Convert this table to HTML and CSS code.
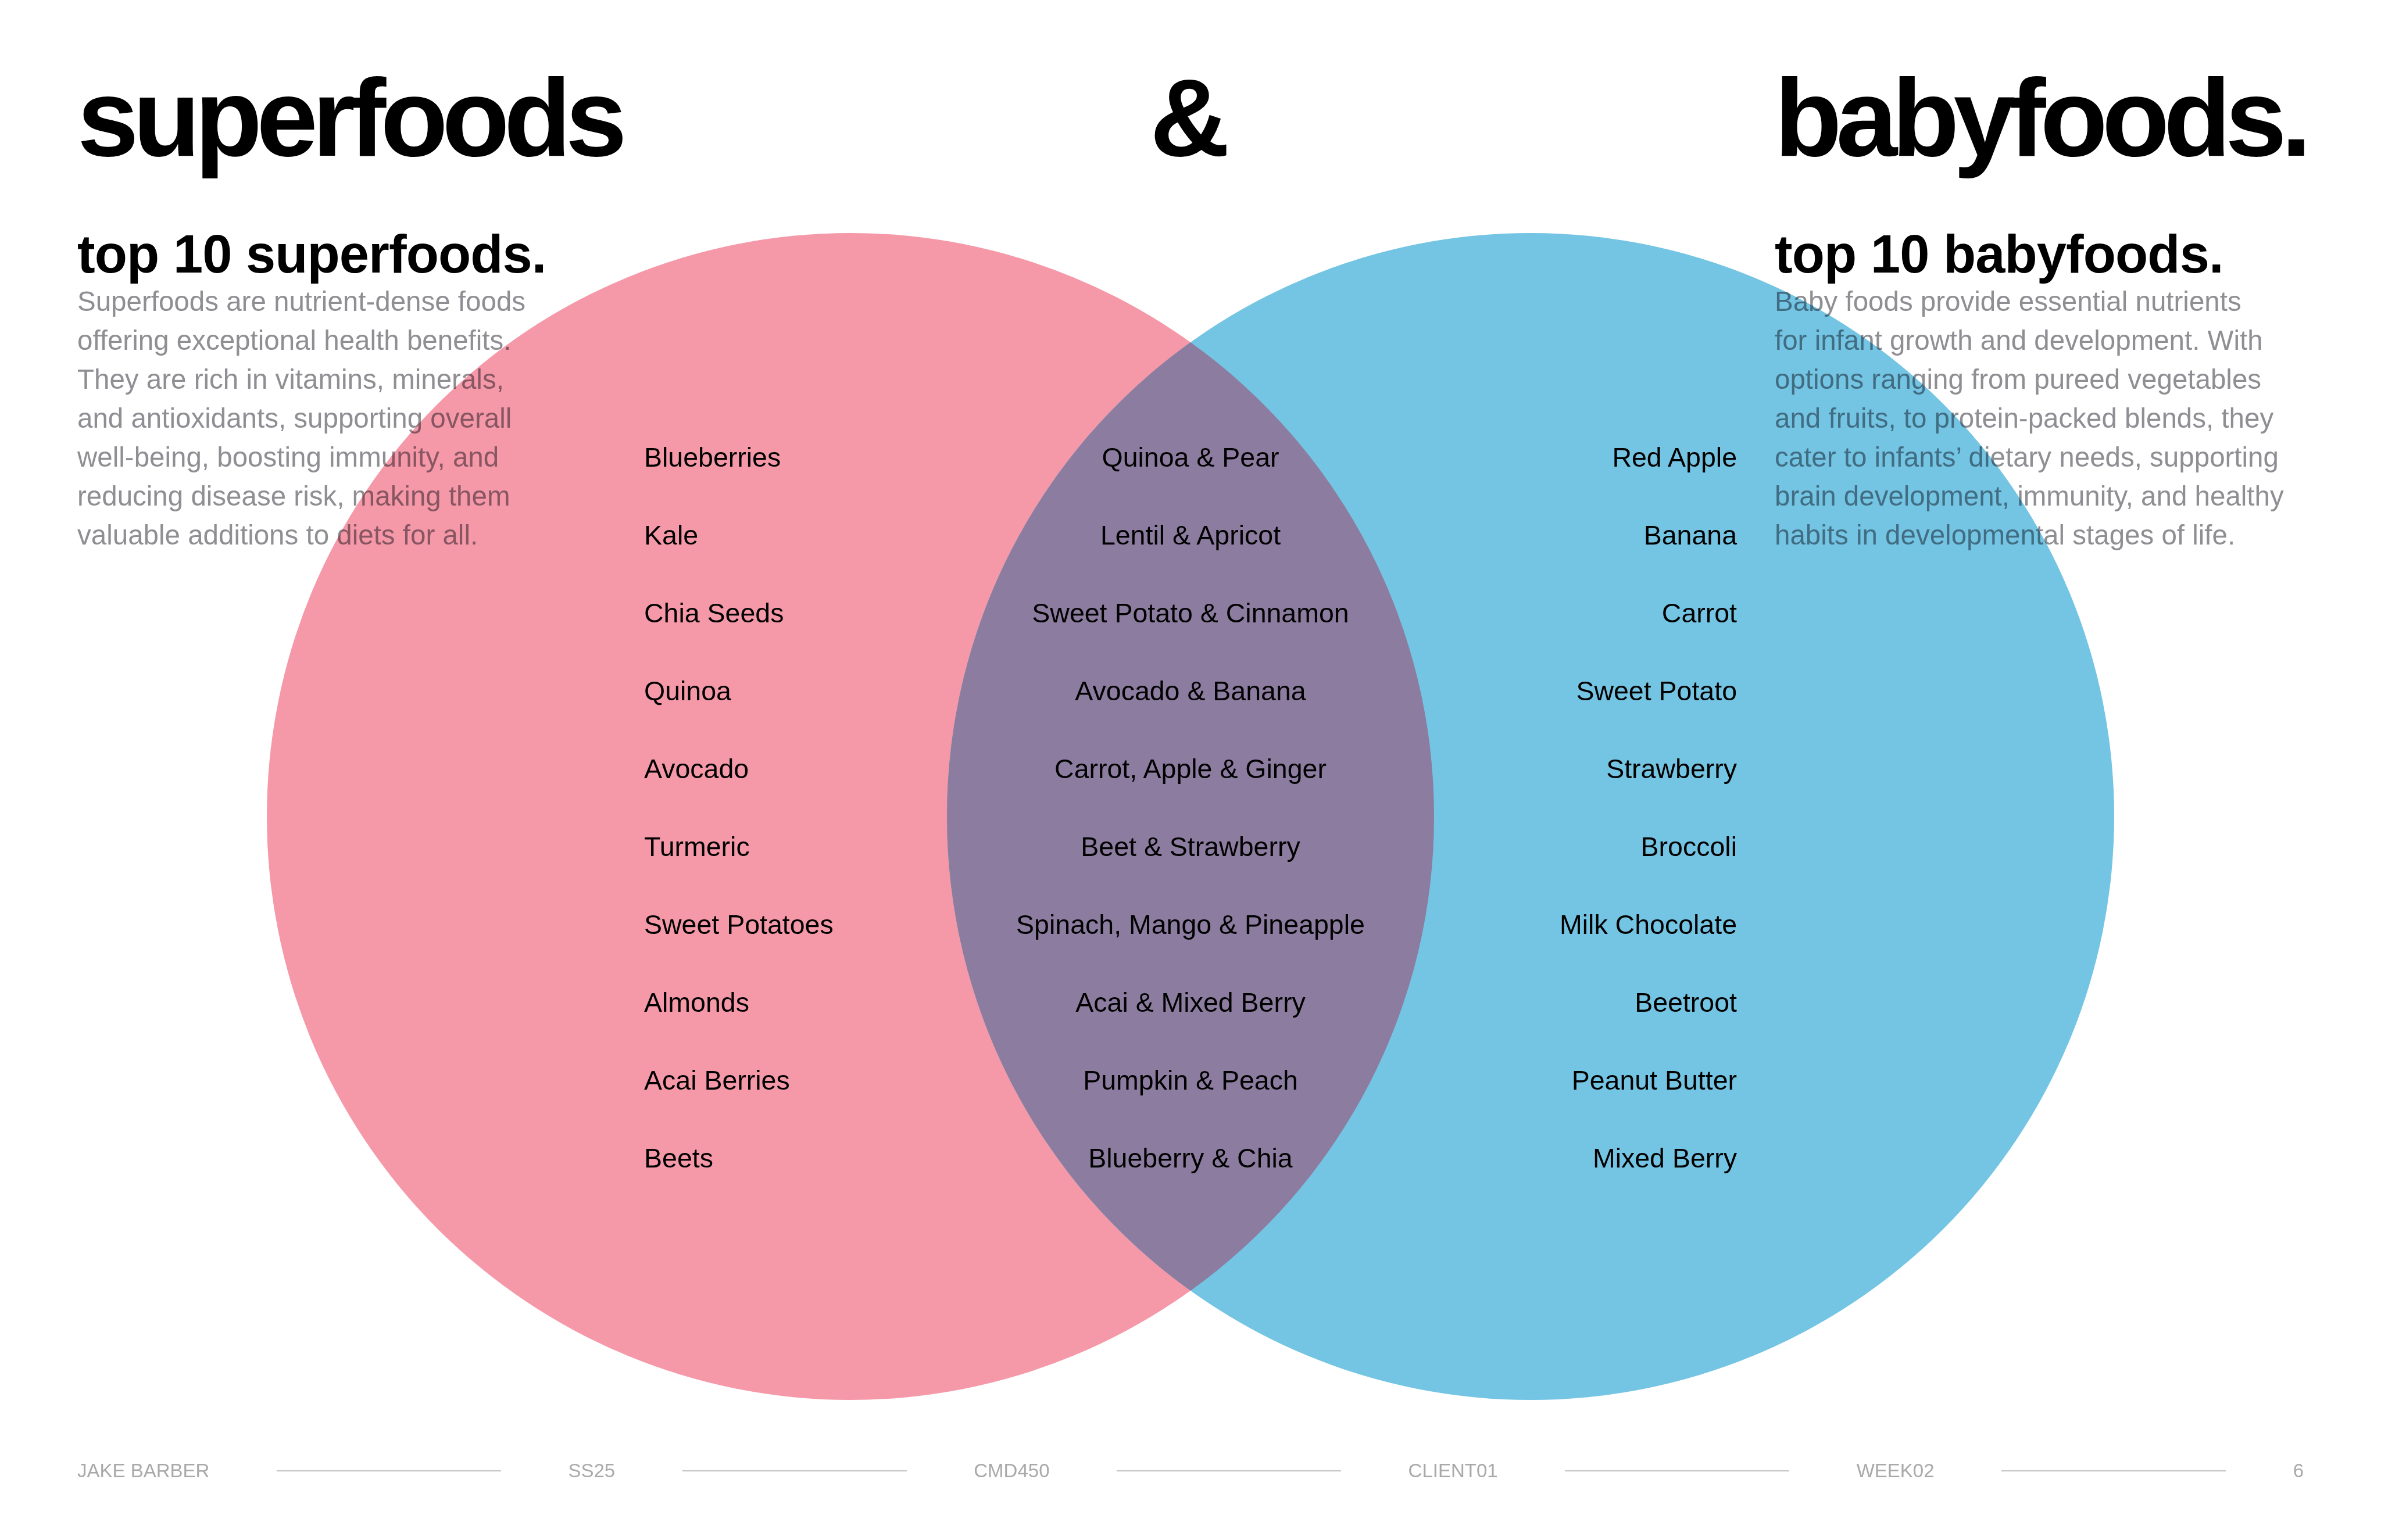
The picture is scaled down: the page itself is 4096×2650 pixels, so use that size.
FILE: index.html
```html
<!DOCTYPE html>
<html lang="en">
<head>
<meta charset="utf-8">
<title>superfoods &amp; babyfoods.</title>
<link rel="stylesheet" href="styles.css">
</head>
<body>
<div class="page">
  <header class="titles">
    <h1 class="title title-left">superfoods</h1>
    <h1 class="title title-mid">&amp;</h1>
    <h1 class="title title-right">babyfoods.</h1>
  </header>

  <main class="content">
    <section class="intro">
      <h2 class="intro-heading">top 10 superfoods.</h2>
      <p class="intro-text">Superfoods are nutrient-dense foods<br>offering exceptional health benefits.<br>They are rich in vitamins, minerals,<br>and antioxidants, supporting overall<br>well-being, boosting immunity, and<br>reducing disease risk, making them<br>valuable additions to diets for all.</p>
    </section>

    <div class="lists">
      <ul class="list list-left">
        <li>Blueberries</li>
        <li>Kale</li>
        <li>Chia Seeds</li>
        <li>Quinoa</li>
        <li>Avocado</li>
        <li>Turmeric</li>
        <li>Sweet Potatoes</li>
        <li>Almonds</li>
        <li>Acai Berries</li>
        <li>Beets</li>
      </ul>
      <ul class="list list-mid">
        <li>Quinoa &amp; Pear</li>
        <li>Lentil &amp; Apricot</li>
        <li>Sweet Potato &amp; Cinnamon</li>
        <li>Avocado &amp; Banana</li>
        <li>Carrot, Apple &amp; Ginger</li>
        <li>Beet &amp; Strawberry</li>
        <li>Spinach, Mango &amp; Pineapple</li>
        <li>Acai &amp; Mixed Berry</li>
        <li>Pumpkin &amp; Peach</li>
        <li>Blueberry &amp; Chia</li>
      </ul>
      <ul class="list list-right">
        <li>Red Apple</li>
        <li>Banana</li>
        <li>Carrot</li>
        <li>Sweet Potato</li>
        <li>Strawberry</li>
        <li>Broccoli</li>
        <li>Milk Chocolate</li>
        <li>Beetroot</li>
        <li>Peanut Butter</li>
        <li>Mixed Berry</li>
      </ul>
    </div>

    <section class="intro intro-right">
      <h2 class="intro-heading">top 10 babyfoods.</h2>
      <p class="intro-text">Baby foods provide essential nutrients<br>for infant growth and development. With<br>options ranging from pureed vegetables<br>and fruits, to protein-packed blends, they<br>cater to infants’ dietary needs, supporting<br>brain development, immunity, and healthy<br>habits in developmental stages of life.</p>
    </section>
  </main>

  <footer class="footer">
    <span class="footer-item">JAKE BARBER</span>
    <span class="rule"></span>
    <span class="footer-item">SS25</span>
    <span class="rule"></span>
    <span class="footer-item">CMD450</span>
    <span class="rule"></span>
    <span class="footer-item">CLIENT01</span>
    <span class="rule"></span>
    <span class="footer-item">WEEK02</span>
    <span class="rule"></span>
    <span class="footer-item">6</span>
  </footer>

  <svg class="venn" width="4096" height="2650" viewBox="0 0 4096 2650" aria-hidden="true">
    <circle cx="1463" cy="1405" r="1004" fill="#F599A9"/>
    <circle cx="2633" cy="1405" r="1004" fill="#74C4E3"/>
    <path d="M 2048 589 A 1004 1004 0 0 1 2048 2221 A 1004 1004 0 0 1 2048 589 Z" fill="#8C7CA0"/>
  </svg>
</div>
</body>
</html>
```

FILE: styles.css
```css
html, body {
  margin: 0;
  padding: 0;
  background: #ffffff;
}

.page {
  position: relative;
  width: 4096px;
  height: 2650px;
  box-sizing: border-box;
  padding: 0 133px;
  display: flex;
  flex-direction: column;
  overflow: hidden;
  font-family: "Liberation Sans", Arial, Helvetica, sans-serif;
  color: #000000;
}

.titles {
  display: grid;
  grid-template-columns: 1fr auto 1fr;
  padding-top: 107px;
}

.title {
  margin: 0;
  font-size: 190px;
  line-height: 190px;
  font-weight: 700;
  letter-spacing: -0.052em;
  white-space: nowrap;
}

.title-left { justify-self: start; }
.title-mid { justify-self: center; margin-left: -12px; }
.title-right { justify-self: end; margin-right: -4px; }

.content {
  display: flex;
  align-items: flex-start;
}

.intro {
  flex: none;
  width: 975px;
  margin-top: 94px;
}

.intro-right {
  width: 910px;
  margin-left: 65px;
}

.intro-heading {
  margin: 0;
  font-size: 92px;
  line-height: 92px;
  font-weight: 700;
  letter-spacing: -0.01em;
}

.intro-text {
  margin: 2px 0 0;
  font-size: 47.5px;
  line-height: 67px;
  color: #8e8e93;
  white-space: nowrap;
}

.lists {
  flex: none;
  width: 1880px;
  margin-top: 423px;
  display: grid;
  grid-template-columns: 1fr 1fr 1fr;
}

.list {
  list-style: none;
  margin: 0;
  padding: 0;
  font-size: 46.5px;
  line-height: 134px;
  white-space: nowrap;
}

.list-left { text-align: left; }
.list-mid { text-align: center; }
.list-right { text-align: right; }

.footer {
  margin-top: auto;
  margin-bottom: 99px;
  height: 40px;
  display: flex;
  justify-content: space-between;
  align-items: center;
  font-size: 33px;
  line-height: 40px;
  color: #a9a9a9;
}

.rule {
  flex: none;
  width: 386px;
  height: 2px;
  background: #c2c2c2;
}

.venn {
  position: absolute;
  top: 0;
  left: 0;
  mix-blend-mode: multiply;
  pointer-events: none;
}
```
